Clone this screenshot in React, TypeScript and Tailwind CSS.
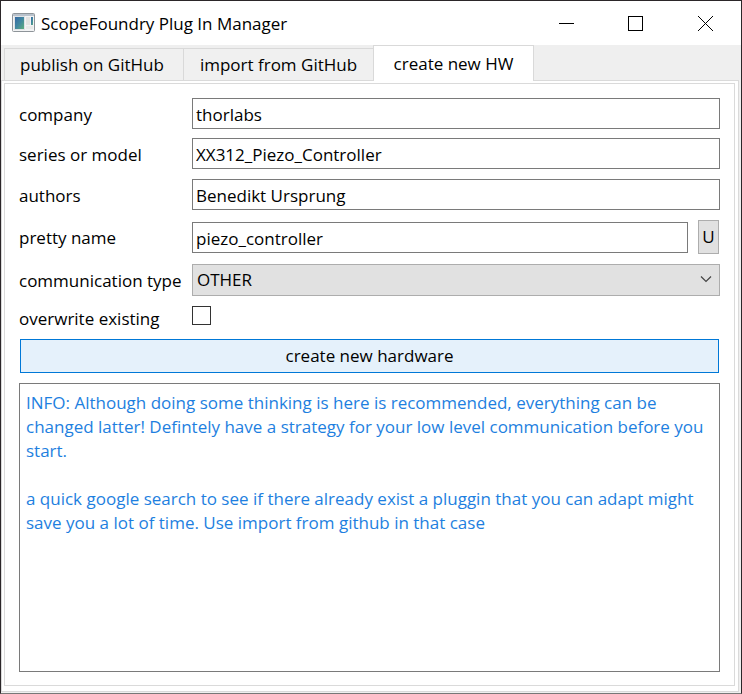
import { useState } from "react";
import type { ReactNode } from "react";

const INFO = `INFO: Although doing some thinking is here is recommended, everything can be changed latter! Defintely have a strategy for your low level communication before you start.

a quick google search to see if there already exist a pluggin that you can adapt might save you a lot of time. Use import from github in that case`;

const inputClass =
  "h-[31px] w-full min-w-0 rounded-none border border-[#7a7a7a] bg-white px-[3px] pt-[2px] outline-none";

const tabs = [
  { name: "publish on GitHub", size: "w-[179px] pr-1" },
  { name: "import from GitHub", size: "w-[190px]" },
  { name: "create new HW", size: "w-[161px]" },
];

function AppIcon() {
  return (
    <svg width="23" height="20" viewBox="0 0 23 20" aria-hidden="true">
      <defs>
        <linearGradient id="pane" x1="0" y1="0" x2="1" y2="1">
          <stop offset="0" stopColor="#3568a4" />
          <stop offset="0.5" stopColor="#4187a0" />
          <stop offset="1" stopColor="#5fae7c" />
        </linearGradient>
      </defs>
      <rect x="0.5" y="0.5" width="22" height="18" rx="1" fill="#f2f3f4" stroke="#8e9499" />
      <rect x="1" y="1" width="21" height="2" fill="#b9c2cc" />
      <rect x="2.5" y="3.5" width="10" height="13" fill="#fff" stroke="#dfe2e4" />
      <rect x="3" y="4" width="9" height="12" fill="url(#pane)" />
      <rect x="14" y="4" width="4" height="8" fill="#e3e3e1" />
      <rect x="14" y="13" width="7" height="3" fill="#e9e9e8" />
      <rect x="19" y="4" width="2" height="8" fill="url(#pane)" />
    </svg>
  );
}

function TitleBar() {
  return (
    <header className="flex h-11 items-center bg-white pl-[11px]">
      <AppIcon />
      <h1 className="grow pl-[6px] pt-[2px]">ScopeFoundry Plug In Manager</h1>
      <div className="flex h-full">
        <button type="button" aria-label="Minimize" className="grid w-[69px] place-items-center">
          <svg width="15" height="15" viewBox="0 0 15 15" stroke="#000" shapeRendering="crispEdges">
            <path d="M0 7.5H15" />
          </svg>
        </button>
        <button type="button" aria-label="Maximize" className="grid w-[69px] place-items-center">
          <svg width="15" height="15" viewBox="0 0 15 15" fill="none" stroke="#000" shapeRendering="crispEdges">
            <path d="M0.5 0.5H14.5V14.5H0.5Z" />
          </svg>
        </button>
        <button type="button" aria-label="Close" className="grid w-[71px] place-items-center">
          <svg width="15" height="15" viewBox="0 0 15 15" fill="none" stroke="#000">
            <path d="M0 0L15 15M15 0L0 15" />
          </svg>
        </button>
      </div>
    </header>
  );
}

function Field({ id, label, children }: { id: string; label: string; children: ReactNode }) {
  return (
    <div className="flex items-center">
      <label htmlFor={id} className="w-[173px] shrink-0 whitespace-nowrap pt-[2px] leading-5">
        {label}
      </label>
      {children}
    </div>
  );
}

export default function App() {
  const [tab, setTab] = useState(2);

  return (
    <div className="flex min-h-screen flex-col border border-[#2b2629] border-b-[#777] bg-[#efefef] font-['Open_Sans','Noto_Sans',sans-serif] text-[17px] leading-6 text-black">
      <TitleBar />
      <div role="tablist" className="flex h-[35px] items-end pl-[3px]">
        {tabs.map(({ name, size }, i) => (
          <button
            key={name}
            type="button"
            role="tab"
            aria-selected={tab === i}
            onClick={() => setTab(i)}
            className={
              "shrink-0 whitespace-nowrap border-t border-[#d9d9d9] text-center " +
              size +
              (tab === i ? " z-10 -mb-px h-9 border-x bg-white" : " h-8 border-l bg-[#f0f0f0]")
            }
          >
            {name}
          </button>
        ))}
      </div>
      <main className="mr-[2px] mb-px flex grow flex-col border border-[#dadada] bg-white pt-[2px] pr-[3px] pb-[5px] pl-[2px]">
        <form
          className="flex grow flex-col gap-[10px] border border-[#dadada] px-[14px] pt-[14px] pb-[13px]"
          onSubmit={(e) => e.preventDefault()}
        >
          <div className="flex flex-col gap-[9px]">
            <Field id="company" label="company">
              <input id="company" defaultValue="thorlabs" className={inputClass} />
            </Field>
            <Field id="model" label="series or model">
              <input id="model" defaultValue="XX312_Piezo_Controller" className={inputClass} />
            </Field>
          </div>
          <Field id="authors" label="authors">
            <input id="authors" defaultValue="Benedikt Ursprung" className={inputClass} />
          </Field>
          <Field id="pretty" label="pretty name">
            <input id="pretty" defaultValue="piezo_controller" className={inputClass} />
            <button
              type="button"
              className="mr-px ml-[10px] h-[34px] w-[21px] shrink-0 border border-[#adadad] bg-[#e1e1e1]"
            >
              U
            </button>
          </Field>
          <Field id="comm" label="communication type">
            <div className="relative grow">
              <select
                id="comm"
                defaultValue="OTHER"
                className="block h-8 w-full appearance-none rounded-none border border-[#adadad] bg-[#e1e1e1] px-1 outline-none"
              >
                <option>OTHER</option>
              </select>
              <svg
                className="pointer-events-none absolute top-3 right-2"
                width="12"
                height="7"
                viewBox="0 0 12 7"
                fill="none"
                stroke="#444"
                strokeWidth="1.2"
              >
                <path d="M1 0.5L6 5.5L11 0.5" />
              </svg>
            </div>
          </Field>
          <Field id="overwrite" label="overwrite existing">
            <input
              id="overwrite"
              type="checkbox"
              className="mb-1 size-[19px] appearance-none border border-[#333] bg-white checked:bg-[#0078d7]"
            />
          </Field>
          <button type="submit" className="mx-px h-[34px] border border-[#0078d7] bg-[#e5f1fb]">
            create new hardware
          </button>
          <textarea
            aria-label="information"
            readOnly
            value={INFO}
            className="min-h-24 grow resize-none rounded-none border border-[#7a7a7a] bg-white px-[6px] py-[7px] text-[#1e7fe0] outline-none"
          />
        </form>
      </main>
    </div>
  );
}
